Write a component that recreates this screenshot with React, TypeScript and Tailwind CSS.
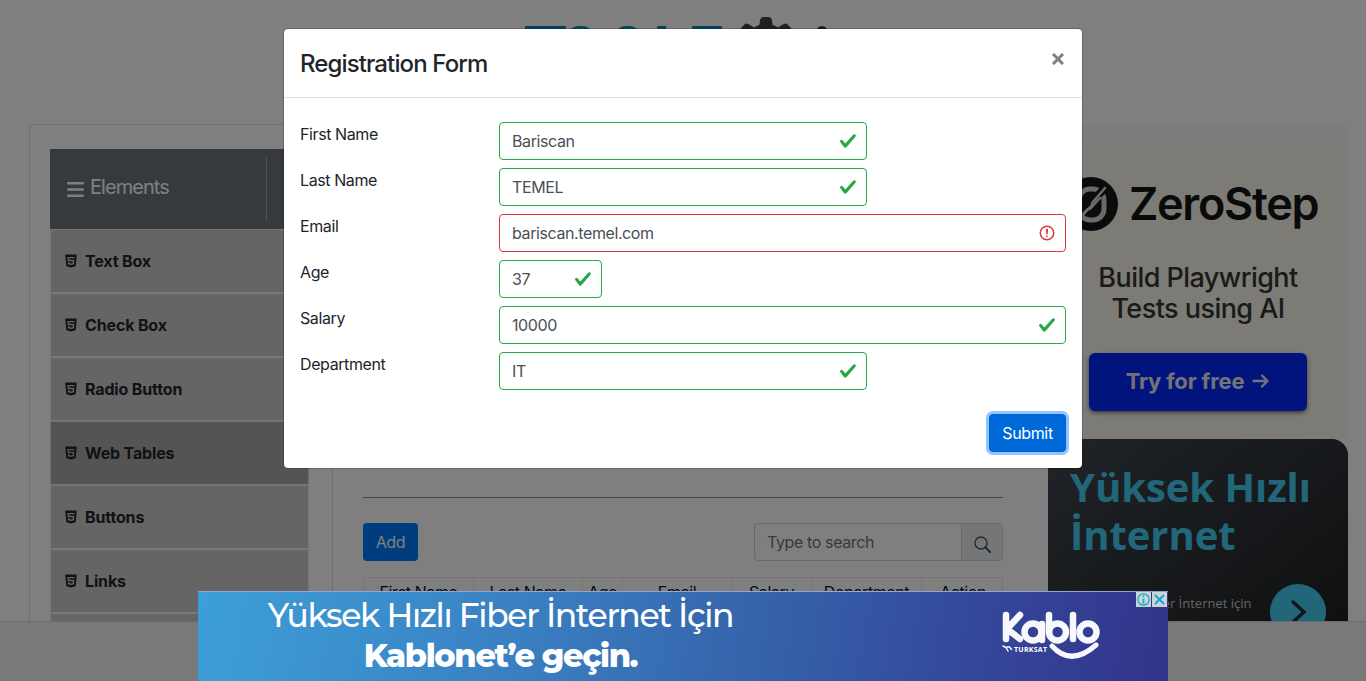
import { AiFillHtml5 } from "react-icons/ai";

const menu = ["Text Box", "Check Box", "Radio Button", "Web Tables", "Buttons", "Links", "Broken Links - Images"];

const columns = [
  { name: "First Name", width: "w-[110px]" },
  { name: "Last Name", width: "w-[109px]" },
  { name: "Age", width: "w-[40px]" },
  { name: "Email", width: "w-[109px]" },
  { name: "Salary", width: "w-[80px]" },
  { name: "Department", width: "w-[110px]" },
  { name: "Action", width: "w-[82px]" },
];

const fields = [
  { label: "First Name", value: "Bariscan", width: "w-[368px]", valid: true },
  { label: "Last Name", value: "TEMEL", width: "w-[368px]", valid: true },
  { label: "Email", value: "bariscan.temel.com", width: "w-[567px]", valid: false },
  { label: "Age", value: "37", width: "w-[103px]", valid: true },
  { label: "Salary", value: "10000", width: "w-[567px]", valid: true },
  { label: "Department", value: "IT", width: "w-[368px]", valid: true },
];

function Check() {
  return (
    <svg viewBox="0 0 8 8" className="h-[18px] w-[18px]">
      <path fill="#28a745" d="M2.3 6.73L.6 4.53c-.4-1.04.46-1.4 1.1-.8l1.1 1.4 3.4-3.8c.6-.63 1.6-.27 1.2.7l-4 4.6c-.43.5-.8.4-1.1.1z" />
    </svg>
  );
}

function Alert() {
  return (
    <svg viewBox="0 0 12 12" className="h-[18px] w-[18px]" fill="none" stroke="#dc3545">
      <circle cx="6" cy="6" r="4.5" />
      <path strokeLinejoin="round" d="M5.8 3.6h.4L6 6.5z" />
      <circle cx="6" cy="8.2" r=".6" fill="#dc3545" stroke="none" />
    </svg>
  );
}

function BrandLogo() {
  return (
    <svg className="ml-[520px] block h-[60px] w-[330px]" viewBox="520 0 330 60">
      <defs>
        <linearGradient id="brand" x1="0" y1="26" x2="0" y2="60" gradientUnits="userSpaceOnUse">
          <stop offset="0" stopColor="#1080ac" />
          <stop offset="0.08" stopColor="#0a93c8" />
          <stop offset="1" stopColor="#0a93c8" />
        </linearGradient>
      </defs>
      <text x="524 563 610 655 687" y="59" fontFamily="Inter" fontWeight="900" fontSize="45" fill="url(#brand)">TOOLS</text>
      <rect x="525" y="26" width="41" height="8" fill="url(#brand)" />
      <rect x="692" y="26" width="30" height="8" rx="1" fill="url(#brand)" />
      <g fill="#404040">
        <circle cx="766" cy="47" r="23" />
        <path d="M759 28l1.2-8.5q.5-2.5 3-2.5h5.600q2.500 0 3 2.500l1.200 8.500zM742 34l-1-6 4-4q1.600-1.200 3.200 0l6 3.500zM790 34l1-6-4-4q-1.600-1.200-3.200 0l-6 3.500z" />
        <circle cx="822" cy="32" r="6" />
      </g>
    </svg>
  );
}

function Sidebar() {
  return (
    <div className="ml-5 mt-6 w-[259px] shrink-0">
      <div className="flex h-20 bg-[#6c757d] pt-2">
        <div className="flex h-16 w-[217px] items-center gap-[6px] border-r border-[#a5abb0] pl-[17px] pb-[4px] text-[20px] tracking-[-0.95px] text-white">
          <svg viewBox="0 0 17 15" className="mt-[4px] h-[15px] w-[17px]" fill="white">
            <rect width="17" height="2.500" rx="1" />
            <rect y="6.300" width="17" height="2.500" rx="1" />
            <rect y="12.500" width="17" height="2.500" rx="1" />
          </svg>
          Elements
        </div>
      </div>
      {menu.map((name) => (
        <div
          key={name}
          className={
            name === "Web Tables"
              ? "flex h-16 items-center gap-[6px] border border-[#dae0e5] bg-[#a9a9a9] pl-3 text-[16px] font-bold tracking-[-0.15px] text-[#212529]"
              : "flex h-16 items-center gap-[6px] border border-[#f0f1f3] bg-[#cbcbcb] pl-3 text-[16px] font-bold tracking-[-0.15px] text-[#212529]"
          }
        >
          <AiFillHtml5 className="size-4" />
          {name}
        </div>
      ))}
    </div>
  );
}

function MainPanel() {
  return (
    <main className="ml-[23px] w-[701px] border-l border-[#dfdfdf] pl-[30px] pt-[372px] text-[16px]">
      <div className="mr-[30px] border-t border-[#8f8f8f]" />
      <div className="mr-[30px] mt-[25px] flex h-[38px] justify-between">
        <button className="w-[55px] rounded bg-[#007bff] text-center tracking-[-0.3px] text-white">Add</button>
        <div className="flex w-[249px] rounded border border-[#ced4da]">
          <div className="flex flex-1 items-center pl-3 tracking-[-0.38px] text-[#6c757d]">Type to search</div>
          <div className="flex w-[41px] items-center justify-center border-l border-[#ced4da] bg-[#e9ecef]">
            <svg viewBox="0 0 17 17" className="mt-1 h-[17px] w-[17px]" fill="none" stroke="#495057">
              <circle cx="7" cy="7" r="6" strokeWidth="1.300" />
              <path d="M11.300 11.300L16 16" strokeWidth="2" strokeLinecap="round" />
            </svg>
          </div>
        </div>
      </div>
      <div className="mr-[30px] mt-4 flex h-12 border border-[#e9e9e9]">
        {columns.map((c) => (
          <div key={c.name} className={`${c.width} shrink-0 border-r border-[#f0f0f0] pt-[2px] text-center tracking-[-0.4px] text-[#111] last:border-0`}>
            {c.name}
          </div>
        ))}
      </div>
    </main>
  );
}

function SideAds() {
  return (
    <aside className="flex w-[314px] flex-col pl-[14px]">
      <div className="flex h-[315px] w-[300px] flex-col items-center border-t-[15px] border-[#f8f8f8] bg-[#fbf6ed]">
        <div className="mt-[34px] flex items-center gap-[11px] self-start pl-4">
          <svg viewBox="0 0 54 54" className="size-[54px]">
            <circle cx="27" cy="27" r="27" fill="#171717" />
            <rect x="15" y="12" width="25" height="31" rx="11" fill="none" stroke="#d8d5cf" strokeWidth="5" />
            <path d="M8 45L43 9" stroke="#171717" strokeWidth="8" />
            <path d="M12 44l12-12M18 39l10-11M28 26l13-15M26 32l10-11" stroke="#dedad4" strokeWidth="2.500" strokeLinecap="round" />
          </svg>
          <div className="whitespace-nowrap text-[45px] font-semibold leading-[62px] tracking-[-1.3px] text-[#151515]">ZeroStep</div>
        </div>
        <div className="mt-[27px] text-center text-[27px] font-medium leading-[31px] tracking-[-0.55px] text-[#353432]">
          Build Playwright
          <br />
          Tests using AI
        </div>
        <div className="mt-[29px] mr-px flex h-[58px] w-[218px] items-center justify-center gap-2 rounded-md bg-[#0327fb] pb-[2px] text-[22px] font-bold tracking-[-0.15px] text-[#e6e6ef] shadow-[0_2px_4px_#777]">
          Try for free
          <svg viewBox="0 0 17 14" className="h-[14px] w-[17px]" fill="none" stroke="#e6e6ef" strokeWidth="2.400" strokeLinecap="round" strokeLinejoin="round">
            <path d="M1.500 7h14M10 1.500L15.500 7 10 12.500" />
          </svg>
        </div>
      </div>
      <div className="h-[250px] w-[300px] rounded-t-2xl bg-linear-to-br from-[#414951] to-[#191a1c] pl-[22px] pt-6 font-['Open_Sans']">
        <div className="whitespace-nowrap text-[40px] font-bold leading-[48px] tracking-[-0.05px] text-[#45cdf2]">
          Yüksek Hızlı
          <br />
          İnternet
        </div>
        <div className="mt-[25px] flex">
          <div className="w-[200px] whitespace-nowrap pt-[10px] text-[13px] leading-[18px] text-[#c9c9c9]">
            Yüksek Hızlı Fiber İnternet için
            <br />
            Kablonet’e geçin
          </div>
          <svg viewBox="0 0 56 56" className="size-14 shrink-0">
            <circle cx="28" cy="28" r="28" fill="#45cdf2" />
            <path d="M23 18l11 10-11 10" fill="none" stroke="#25292f" strokeWidth="3.500" strokeLinecap="round" />
          </svg>
        </div>
      </div>
    </aside>
  );
}

function Modal() {
  return (
    <div className="absolute left-[283px] top-[28px] w-[800px] rounded-[5px] border border-black/20 bg-white bg-clip-padding text-[#212529]">
      <div className="flex h-[69px] items-center justify-between border-b border-[#dee2e6] pl-4 pr-[18px]">
        <h2 className="pt-[2px] text-[24px] font-medium tracking-[-0.88px]">Registration Form</h2>
        <svg viewBox="0 0 12 12" className="-mt-2 h-3 w-3" stroke="#7f7f7f" strokeWidth="3" fill="none">
          <path d="M1 1l10 10M11 1L1 11" />
        </svg>
      </div>
      <form className="flex flex-col gap-2 px-4 pt-6 text-[16px]">
        {fields.map((f) => (
          <div key={f.label} className="flex h-[38px]">
            <label className="w-[199px] tracking-[-0.4px]">{f.label}</label>
            <div
              className={`${f.width} ${f.valid ? "border-[#28a745]" : "border-[#dc3545]"} flex items-center justify-between rounded border pl-3 pr-[9px] tracking-[-0.4px] text-[#495057]`}
            >
              {f.value}
              {f.valid ? <Check /> : <Alert />}
            </div>
          </div>
        ))}
      </form>
      <div className="flex h-[78px] items-center justify-end pr-4 pt-[7px]">
        <button className="h-[38px] w-[77px] rounded border border-[#0062cc] bg-[#0069d9] text-center tracking-[-0.35px] text-white shadow-[0_0_0_3px_#8fc4ff]">
          Submit
        </button>
      </div>
    </div>
  );
}

function BottomBanner() {
  return (
    <div className="absolute left-[198px] top-[591px] flex h-[90px] w-[970px] border-t border-[#8fa9cf] bg-linear-[100deg,#3d9fd8,#3a80c2_33%,#3560a8_60%,#34479a_80%,#33348a] text-white">
      <div className="flex w-[605px] flex-col items-center whitespace-nowrap font-['Montserrat','Inter',sans-serif]">
        <div className="mt-[2px] text-[33px] font-medium leading-[42px] tracking-[-1.36px]">Yüksek Hızlı Fiber İnternet İçin</div>
        <div className="text-[32px] font-extrabold leading-[40px] tracking-[-1.35px]">Kablonet’e geçin.</div>
      </div>
      <svg viewBox="0 0 100 55" className="ml-[199px] mt-[17px] h-[55px] w-[100px]" fill="none" stroke="#f8f8ff" strokeWidth="6.500" strokeLinecap="round" strokeLinejoin="round">
        <path d="M4 6v24M18 6L5 20l13 10" />
        <circle cx="31" cy="23" r="8.500" />
        <path d="M40 15v16M47 6v17" />
        <circle cx="55.500" cy="23" r="8.500" />
        <path d="M71 6v24" />
        <circle cx="86" cy="23" r="8.500" />
        <path d="M50 37q19 21 44-1" strokeWidth="5" />
        <path d="M1 37l3 1.500 2 3.500M5 38h2.500l2 2.500" strokeWidth="1.500" />
        <text x="12" y="42.500" fill="#fff" stroke="none" fontFamily="Open Sans" fontSize="7" fontWeight="700" textLength="33">TURKSAT</text>
      </svg>
      <div className="absolute right-[1px] top-0 flex h-[15px] gap-px">
        <svg viewBox="0 0 15 15" className="size-[15px] bg-[#cfd3d5]" fill="none" stroke="#00aecd">
          <circle cx="7.500" cy="7.500" r="5.700" strokeWidth="1.200" />
          <path d="M7.500 6.500v5M7.500 3.500v1.500" strokeWidth="1.700" />
        </svg>
        <svg viewBox="0 0 15 15" className="size-[15px] bg-[#cfd3d5]" fill="none" stroke="#00aecd" strokeWidth="1.800">
          <path d="M3 3l9 9M12 3l-9 9" />
        </svg>
      </div>
    </div>
  );
}

export default function App() {
  return (
    <div className="relative h-[681px] w-[1366px] overflow-hidden bg-white font-['Inter',sans-serif] leading-6">
      <div className="h-[124px]">
        <BrandLogo />
      </div>
      <div className="flex h-[600px] pl-[29px]">
        <div className="flex w-[1005px] rounded-tl-md border-l border-t border-[#dfdfdf]">
          <Sidebar />
          <MainPanel />
        </div>
        <SideAds />
      </div>
      <footer className="absolute inset-x-0 top-[621px] h-[60px] border-t border-[#d6d6d6] bg-[#f3f3f3]" />
      <div className="absolute inset-0 bg-black/50" />
      <Modal />
      <BottomBanner />
    </div>
  );
}
